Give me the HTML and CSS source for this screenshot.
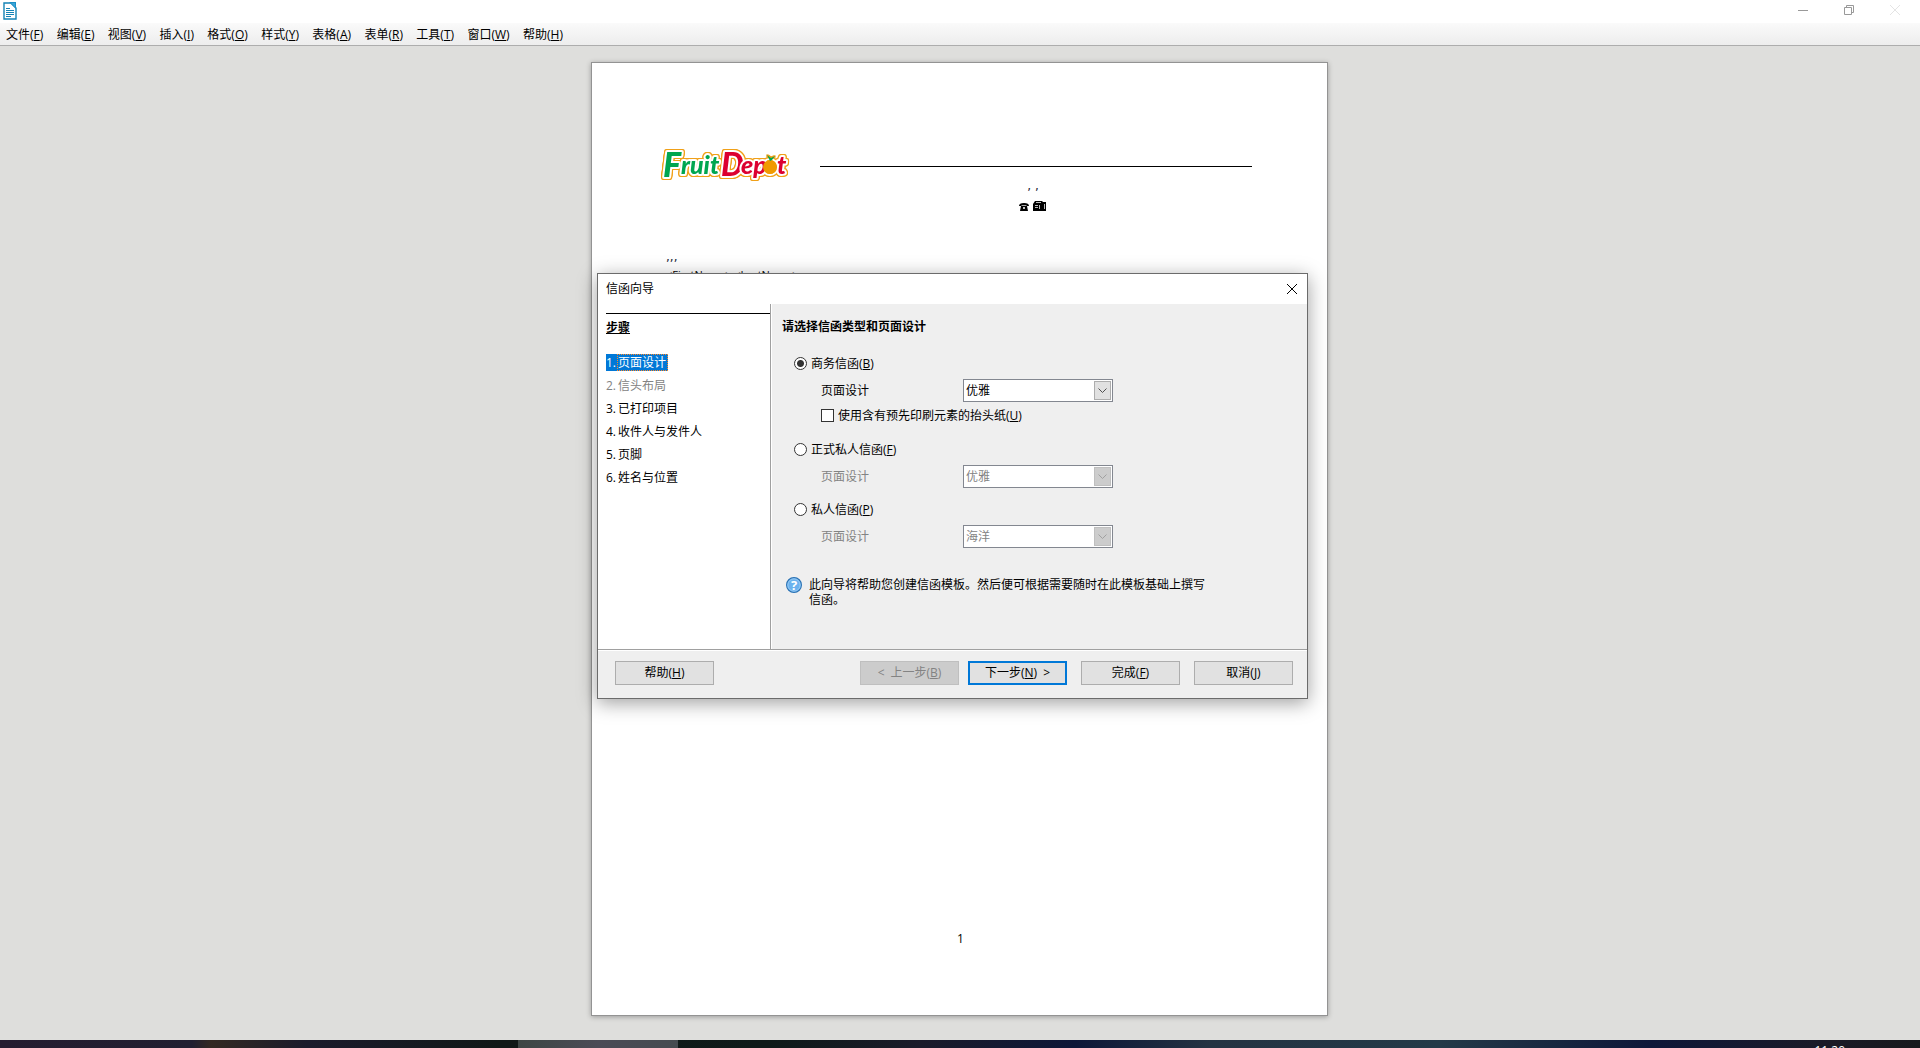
FILE: index.html
```html
<!DOCTYPE html>
<html lang="zh-CN">
<head>
<meta charset="utf-8">
<title>信函向导</title>
<link rel="stylesheet" href="styles.css">
</head>
<body>
<header class="titlebar">
  <svg class="app-icon" width="14" height="18" viewBox="0 0 14 18" aria-hidden="true">
    <path d="M1 1H8L13 6V17H1Z" fill="#fff" stroke="#1583b5" stroke-width="1.4"/>
    <path d="M6 0H13V7Z" fill="#1b8fc6"/>
    <path d="M8 1L12 5V1Z" fill="#3ba4d6"/>
    <path d="M3 6.500H7M3 8.500H11M3 10.500H11M3 12.500H11M3 14.500H8" stroke="#1583b5"/>
  </svg>
  <div class="window-controls">
    <button type="button" aria-label="最小化"><svg width="10" height="10" viewBox="0 0 10 10"><path d="M0 5.500H10" stroke="#999"/></svg></button>
    <button type="button" aria-label="还原"><svg width="10" height="10" viewBox="0 0 10 10" fill="none" stroke="#999"><path d="M.5 2.500H7.500V9.500H.5ZM2.500 2.500V.5H9.500V7.500H7.500"/></svg></button>
    <button type="button" aria-label="关闭"><svg width="10" height="10" viewBox="0 0 10 10"><path d="M0 0L10 10M10 0L0 10" stroke="#e4e4e4"/></svg></button>
  </div>
</header>
<nav class="menubar">
  <div class="menus">
    <button type="button">文件(<u>F</u>)</button>
    <button type="button">编辑(<u>E</u>)</button>
    <button type="button">视图(<u>V</u>)</button>
    <button type="button">插入(<u>I</u>)</button>
    <button type="button">格式(<u>O</u>)</button>
    <button type="button">样式(<u>Y</u>)</button>
    <button type="button">表格(<u>A</u>)</button>
    <button type="button">表单(<u>R</u>)</button>
    <button type="button">工具(<u>T</u>)</button>
    <button type="button">窗口(<u>W</u>)</button>
    <button type="button">帮助(<u>H</u>)</button>
  </div>
</nav>

<main class="workspace">
  <article class="page">
    <div class="letterhead">
      <svg class="logo" width="128" height="40" viewBox="0 0 128 40" role="img" aria-label="Fruit Depot">
        <circle class="fruit" cx="109" cy="21" r="7"/>
        <g class="green"><text class="big" x="2" y="31">F</text><text x="20" y="28">ruit</text></g>
        <g class="red"><text class="big" x="60" y="30">D</text><text x="80" y="28">ep</text><text x="116" y="28">t</text></g>
        <circle class="flesh" cx="109" cy="21" r="7"/>
        <path class="leaf" d="M109 15L106 9L110 12L114 10L111 14Z"/>
      </svg>
      <div class="contact">
        <p class="commas">, ,</p>
        <p class="devices">
          <svg width="10" height="8" viewBox="0 0 10 8" aria-hidden="true"><path d="M0 3Q0 0 5 0T10 3H8L9 8H1L2 3Z"/><circle cx="5" cy="5" r="1" fill="#fff"/><path d="M2.500 2.500H7.500" stroke="#aaa"/></svg>
          <svg width="14" height="10" viewBox="0 0 14 10" aria-hidden="true"><path d="M0 3L2 0H9L10 1H13V10H0Z"/><path d="M3 1.500H8M2 4.500H5M2 6.500H5M6.500 4V8M11.500 3V8" stroke="#bbb"/></svg>
        </p>
      </div>
    </div>
    <div class="recipient">
      <p class="commas">,,,</p>
      <p class="name">&lt;FirstName&gt; &lt;LastName&gt;</p>
    </div>
    <footer class="page-number">1</footer>
  </article>

  <section class="dialog" role="dialog" aria-labelledby="dialog-title">
    <header class="dialog-title">
      <h1 id="dialog-title">信函向导</h1>
      <button type="button" aria-label="关闭"><svg width="10" height="10" viewBox="0 0 10 10"><path d="M0 0L10 10M10 0L0 10" stroke="#000"/></svg></button>
    </header>
    <div class="dialog-body">
      <nav class="steps">
        <div class="steps-inner">
          <h2>步骤</h2>
          <ol>
            <li class="current"><span>1.</span><button type="button">页面设计</button></li>
            <li class="off"><span>2.</span><button type="button" disabled>信头布局</button></li>
            <li><span>3.</span><button type="button">已打印项目</button></li>
            <li><span>4.</span><button type="button">收件人与发件人</button></li>
            <li><span>5.</span><button type="button">页脚</button></li>
            <li><span>6.</span><button type="button">姓名与位置</button></li>
          </ol>
        </div>
      </nav>
      <form class="options">
        <h2>请选择信函类型和页面设计</h2>
        <div class="group">
          <label class="choice"><input type="radio" name="kind" checked>商务信函(<u>B</u>)</label>
          <div class="design">
            <label for="d1">页面设计</label>
            <div class="combo"><select id="d1"><option>优雅</option></select><svg width="17" height="19" viewBox="0 0 17 19" aria-hidden="true"><rect x=".5" y=".5" width="16" height="18"/><path d="M4.500 7.500L8.500 11.500L12.500 7.500"/></svg></div>
          </div>
          <label class="choice paper"><input type="checkbox">使用含有预先印刷元素的抬头纸(<u>U</u>)</label>
        </div>
        <div class="group">
          <label class="choice"><input type="radio" name="kind">正式私人信函(<u>F</u>)</label>
          <div class="design off">
            <label for="d2">页面设计</label>
            <div class="combo"><select id="d2" disabled><option>优雅</option></select><svg width="17" height="19" viewBox="0 0 17 19" aria-hidden="true"><rect x=".5" y=".5" width="16" height="18"/><path d="M4.500 7.500L8.500 11.500L12.500 7.500"/></svg></div>
          </div>
        </div>
        <div class="group">
          <label class="choice"><input type="radio" name="kind">私人信函(<u>P</u>)</label>
          <div class="design off">
            <label for="d3">页面设计</label>
            <div class="combo"><select id="d3" disabled><option>海洋</option></select><svg width="17" height="19" viewBox="0 0 17 19" aria-hidden="true"><rect x=".5" y=".5" width="16" height="18"/><path d="M4.500 7.500L8.500 11.500L12.500 7.500"/></svg></div>
          </div>
        </div>
        <div class="hint">
          <svg width="16" height="16" viewBox="0 0 16 16" aria-hidden="true"><circle cx="8" cy="8" r="7.400" fill="#6cb2ee" stroke="#2c73b4" stroke-width="1.200"/><circle cx="8" cy="8" r="6.200" fill="none" stroke="#a5d2f6" stroke-width=".8"/><text x="8" y="13" text-anchor="middle">?</text></svg>
          <p>此向导将帮助您创建信函模板。然后便可根据需要随时在此模板基础上撰写信函。</p>
        </div>
      </form>
    </div>
    <footer class="actions">
      <button type="button" class="help">帮助(<u>H</u>)</button>
      <button type="button" class="back" disabled><span>&lt;</span><span>上一步(<u>B</u>)</span></button>
      <button type="button" class="next"><span>下一步(<u>N</u>)</span><span>&gt;</span></button>
      <button type="button">完成(<u>F</u>)</button>
      <button type="button">取消(<u>J</u>)</button>
    </footer>
  </section>
</main>

<footer class="taskbar">
  <div class="task-active"></div>
  <time>11:20</time>
</footer>
</body>
</html>
```
FILE: styles.css
```css
* { box-sizing: border-box; }
body {
  margin: 0;
  min-height: 100vh;
  display: flex;
  flex-direction: column;
  background: #dededc;
  color: #000;
  font: 12px/16px "Open Sans", "Noto Sans CJK SC", sans-serif;
}
h1, h2, p, ol { margin: 0; padding: 0; font-size: 12px; }
h1 { font-weight: 400; }
button, select, input { font: inherit; color: inherit; margin: 0; }
button { padding: 0; border: 0; background: none; }
svg { display: block; }
u { text-underline-offset: 1px; }

/* window frame */
.titlebar {
  height: 23px;
  padding: 0 2px 0 3px;
  display: flex;
  justify-content: space-between;
  background: #fff;
}
.app-icon { margin-top: 2px; }
.window-controls { display: flex; height: 20px; }
.window-controls button { width: 46px; display: grid; place-items: center; }
.menubar {
  height: 23px;
  padding-top: 1px;
  background: linear-gradient(#fafafa, #ededed);
  border-bottom: 1px solid #adadad;
}
.menus {
  display: flex;
  justify-content: space-between;
  width: 569px;
  height: 100%;
}
.menus button { padding: 0 6px; }

/* document */
.workspace {
  position: relative;
  flex: 1;
  display: flex;
  justify-content: center;
  padding: 16px 1px 24px 0;
}
.page {
  width: 737px;
  padding: 83px 75px 68px 69px;
  display: flex;
  flex-direction: column;
  background: #fff;
  border: 1px solid #939393;
  box-shadow: 0 1px 5px rgba(0, 0, 0, .3);
}
.letterhead { display: flex; gap: 31px; }
.logo {
  overflow: visible;
  stroke: #fff;
  stroke-width: 4px;
  stroke-linejoin: round;
  paint-order: stroke;
  filter: drop-shadow(1px 0 #f0a018) drop-shadow(-1px 0 #f0a018) drop-shadow(0 1px #f0a018) drop-shadow(0 -1px #f0a018);
}
.logo text { font: italic 900 25px Lato, "Open Sans", sans-serif; }
.logo .big { font-size: 34px; }
.logo .red .big { font-size: 32px; }
.green, .leaf { fill: #00a650; }
.red { fill: #dc0030; }
.fruit, .flesh { fill: #f09a00; }
.leaf, .flesh { stroke: none; }
.contact {
  flex: 1;
  margin-top: 20px;
  padding: 11px 6px 0 0;
  border-top: 1px solid #000;
  text-align: center;
}
.commas { color: #223; }
.contact .commas, .recipient .commas { font: 12px/16px "DejaVu Sans", sans-serif; }
.devices { display: flex; justify-content: center; align-items: flex-end; gap: 4px; height: 17px; }
.recipient { margin-top: 38px; padding-left: 5px; }
.recipient .name { margin-top: 2px; font-size: 11px; }
.page-number { margin-top: auto; padding-left: 8px; text-align: center; }

/* wizard */
.dialog {
  position: absolute;
  top: 227px;
  left: calc(50% - 363px);
  width: 711px;
  background: #efefef;
  border: 1px solid #6b6b6b;
  box-shadow: 0 4px 18px rgba(0, 0, 0, .38);
}
.dialog-title {
  height: 30px;
  padding: 0 10px 0 8px;
  display: flex;
  align-items: center;
  justify-content: space-between;
  background: #fff;
}
.dialog-body {
  display: grid;
  grid-template-columns: 173px 1fr;
  border-bottom: 1px solid #a0a0a0;
}
.steps { padding: 9px 0 0 8px; background: #fff; border-right: 1px solid #a0a0a0; }
.steps-inner { border-top: 1px solid #000; padding-top: 6px; }
.steps h2 { text-decoration: underline; text-underline-offset: 1px; }
.steps ol { list-style: none; margin-top: 18px; }
.steps li { display: flex; align-items: center; width: max-content; height: 17px; margin-bottom: 6px; }
.steps li span { width: 11px; }
.steps li button { height: 17px; padding: 0 1px; white-space: nowrap; }
.steps .current { background: #0078d7; color: #fff; }
.steps .current button { outline: 1px dotted #ff8728; outline-offset: -1px; padding-right: 2px; }
.off { color: #838383; }

.options { padding: 15px 20px 42px 10px; border-left: 1px solid #fff; }
.options h2 { margin-bottom: 20px; }
.group { padding-left: 12px; margin-bottom: 13px; }
.choice { display: flex; align-items: center; width: max-content; height: 17px; }
.choice input {
  appearance: none;
  width: 13px;
  height: 13px;
  margin-right: 4px;
  background: #fff;
  border: 1px solid #333;
}
.choice input[type="radio"] { border-radius: 50%; }
.choice input:checked { background: radial-gradient(circle, #333 3px, #fff 4px); }
.design {
  display: grid;
  grid-template-columns: 142px 150px;
  align-items: center;
  margin: 7px 0 0 27px;
}
.paper { margin: 5px 0 17px 27px; }
.combo { display: grid; align-items: center; }
.combo select, .combo svg { grid-area: 1 / 1; }
.combo select {
  appearance: none;
  width: 100%;
  height: 23px;
  padding: 0 0 0 2px;
  background: #fff;
  border: 1px solid #838790;
  border-radius: 0;
  opacity: 1;
}
.combo svg { justify-self: end; margin-right: 2px; pointer-events: none; fill: #e1e1e1; stroke: #adadad; }
.combo path { fill: none; stroke: #505050; }
.off rect { fill: #ccc; stroke: #bfbfbf; }
.off path { stroke: #a0a0a0; }
.hint { display: flex; gap: 7px; padding-left: 4px; margin-top: 29px; }
.hint p { width: 400px; line-height: 15px; }
.hint text { font: 700 13px "Open Sans", sans-serif; fill: #fff; }

.actions {
  display: flex;
  gap: 14px;
  padding: 10px 14px 13px 17px;
  border-top: 1px solid #fff;
}
.actions button { width: 99px; height: 24px; background: #e1e1e1; border: 1px solid #adadad; }
.actions .help { margin-right: auto; }
.actions .back, .actions .next { display: flex; align-items: center; justify-content: center; gap: 6px; }
.actions .back { margin-right: -5px; background: #ccc; border-color: #bfbfbf; color: #838383; }
.actions .next { border: 2px solid #0078d7; }

/* desktop taskbar */
.taskbar {
  height: 8px;
  padding: 0 75px 0 518px;
  display: flex;
  justify-content: space-between;
  overflow: hidden;
  color: #fff;
  background: linear-gradient(90deg, #251c30, #211f31 10%, #332922 11%, #1b1b2c 16%, #101817 26%, #0e1a19 40%, #1a1b2a 48%, #0d1738 56%, #243342 63%, #233a48 75%, #0e1739 86%, #1b1a27 95%, #17181c);
}
.task-active { width: 160px; background: linear-gradient(90deg, #3d4644, #4b4b56 50%, #454b50); }
.taskbar time { padding-top: 3px; }
```
